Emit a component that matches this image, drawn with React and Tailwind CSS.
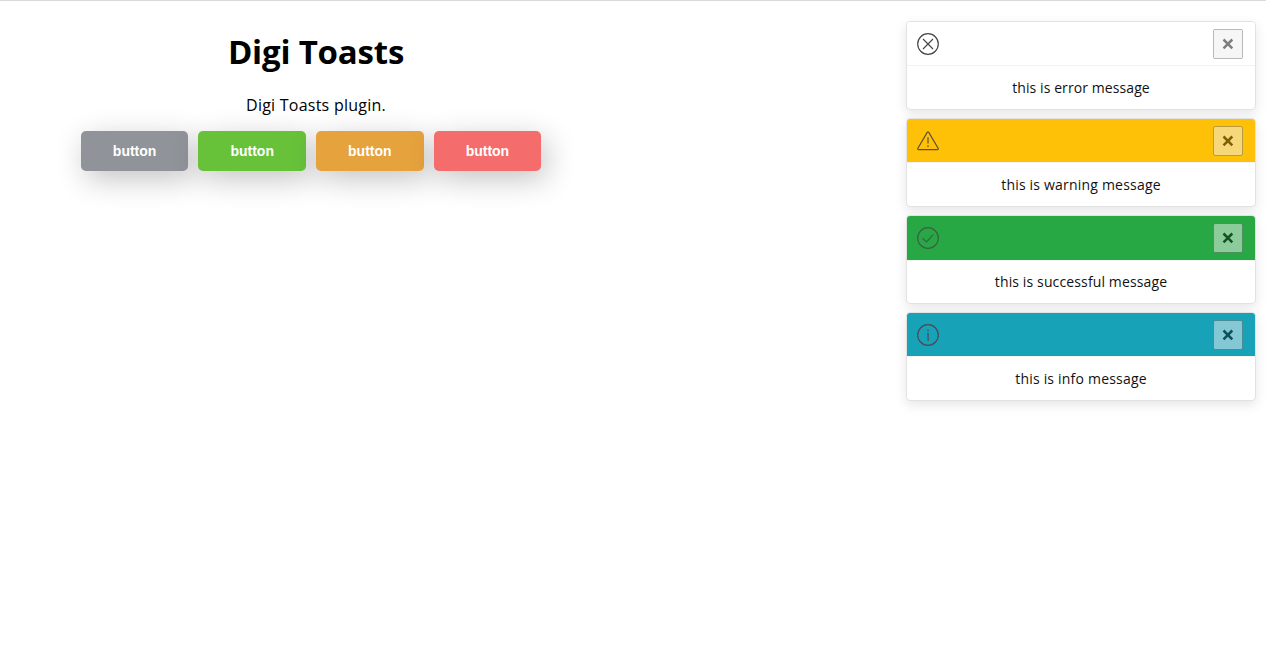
const buttons = ['bg-[#909399]', 'bg-[#67c23a]', 'bg-[#e6a23c]', 'bg-[#f56c6c]'];

const icons = {
  error: (
    <>
      <circle cx="11" cy="11" r="10.3" />
      <path d="M6 6l10 10M16 6L6 16" />
    </>
  ),
  warning: (
    <>
      <path d="M10.2 2.4L.9 18.3Q.3 19.6 1.6 19.6H20.4Q21.7 19.6 21.1 18.3L11.8 2.4Q11 1.3 10.2 2.4Z" />
      <path d="M11 7.2v6.4M11 15.2v1.7" />
    </>
  ),
  success: (
    <>
      <circle cx="11" cy="11" r="10.3" />
      <path d="M5.4 11.2l4.2 3.7 6.8-7.5" />
    </>
  ),
  info: (
    <>
      <circle cx="11" cy="11" r="10.3" />
      <path d="M10.2 9.7h.9v7.3M11 5.4v2" />
    </>
  ),
};

const toasts = [
  { kind: 'error', header: 'h-11 bg-white', text: 'this is error message', tracking: 'tracking-[0.09px]', stroke: 'stroke-[#484848]' },
  { kind: 'warning', header: 'h-11 bg-[#ffc107]', text: 'this is warning message', tracking: 'tracking-[0.2px]', stroke: 'stroke-[#5d5133]' },
  { kind: 'success', header: 'h-[45px] bg-[#28a745]', text: 'this is successful message', tracking: 'pb-px tracking-[0.13px]', stroke: 'stroke-[#3d6046]' },
  { kind: 'info', header: 'h-11 bg-[#17a2b8]', text: 'this is info message', tracking: 'tracking-[0.2px]', stroke: 'stroke-[#4b4b50]' },
];

function Toast({ kind, header, text, tracking, stroke }) {
  return (
    <div className="flex h-[89px] flex-col overflow-hidden rounded-[4px] border border-[#e2e2e2] bg-white shadow-[0_4px_12px_rgba(0,0,0,0.1)]">
      <div className={`flex shrink-0 items-start justify-between border-b border-black/5 bg-clip-padding pt-[7px] pr-3 pl-2.5 ${header}`}>
        <svg className={`mt-1 size-[22px] ${stroke}`} viewBox="0 0 22 22" fill="none" strokeWidth="1.2">
          {icons[kind]}
        </svg>
        <button className="flex size-[30px] items-center justify-center rounded-[2px] border border-[#767676] bg-[#efefef] opacity-50">
          <svg className="size-3 stroke-black" viewBox="0 0 12 12" strokeWidth="2.5">
            <path d="M1.5 1.5l8.8 8.8M10.3 1.5L1.5 10.3" />
          </svg>
        </button>
      </div>
      <p className={`flex flex-1 items-center justify-center text-[14px] leading-[21px] whitespace-nowrap text-[#111] ${tracking}`}>{text}</p>
    </div>
  );
}

export default function App() {
  return (
    <div className="flex h-[652px] justify-between overflow-hidden border-t border-[#d9d9d9] bg-white font-['Open_Sans','Noto_Sans',sans-serif] text-black">
      <main className="flex w-[632px] flex-col items-center">
        <h1 className="mt-[27px] text-[33px] leading-[48px] font-bold tracking-[-0.2px] whitespace-nowrap">Digi Toasts</h1>
        <p className="mt-[17px] text-[16px] leading-6 tracking-[0.24px] whitespace-nowrap">Digi Toasts plugin.</p>
        <div className="mt-[14px] ml-[-10px] flex gap-[10px]">
          {buttons.map((color) => (
            <button
              key={color}
              className={`h-10 w-[107.6px] rounded-[5px] pt-px font-['Liberation_Sans',sans-serif] text-[14px] font-bold text-white shadow-[5px_8px_30px_rgba(0,0,0,0.24)] ${color}`}
            >
              button
            </button>
          ))}
        </div>
      </main>
      <aside className="mt-5 mr-2.5 flex w-[350px] flex-col gap-2">
        {toasts.map((toast) => (
          <Toast key={toast.kind} {...toast} />
        ))}
      </aside>
    </div>
  );
}
